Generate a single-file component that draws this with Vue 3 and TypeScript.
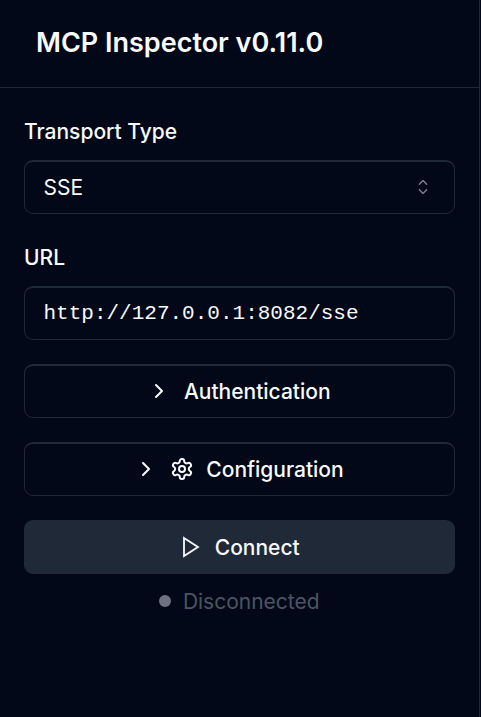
<script setup lang="ts">
import { ref } from 'vue'

const version = '0.11.0'
const transport = ref('SSE')
const url = ref('http://127.0.0.1:8082/sse')
const status = ref('Disconnected')
</script>

<template>
  <aside class="sidebar">
    <header class="header">
      <h1>MCP Inspector v{{ version }}</h1>
    </header>
    <main class="content">
      <div class="field">
        <label>Transport Type</label>
        <button class="box select" type="button" role="combobox">
          <span class="text">{{ transport }}</span>
          <svg class="caret" viewBox="0 0 15 15" fill="currentColor">
            <path fill-rule="evenodd" clip-rule="evenodd" d="M4.93179 5.43179C4.75605 5.60753 4.75605 5.89245 4.93179 6.06819C5.10753 6.24392 5.39245 6.24392 5.56819 6.06819L7.49999 4.13638L9.43179 6.06819C9.60753 6.24392 9.89245 6.24392 10.0682 6.06819C10.2439 5.89245 10.2439 5.60753 10.0682 5.43179L7.81819 3.18179C7.73379 3.0974 7.61933 3.04999 7.49999 3.04999C7.38064 3.04999 7.26618 3.0974 7.18179 3.18179L4.93179 5.43179ZM10.0682 9.56819C10.2439 9.39245 10.2439 9.10753 10.0682 8.93179C9.89245 8.75606 9.60753 8.75606 9.43179 8.93179L7.49999 10.8636L5.56819 8.93179C5.39245 8.75606 5.10753 8.75606 4.93179 8.93179C4.75605 9.10753 4.75605 9.39245 4.93179 9.56819L7.18179 11.8182C7.35753 11.9939 7.64245 11.9939 7.81819 11.8182L10.0682 9.56819Z" />
          </svg>
        </button>
      </div>
      <div class="field">
        <label for="url">URL</label>
        <input id="url" v-model="url" class="box url" type="text" spellcheck="false" />
      </div>
      <button class="box action" type="button">
        <svg class="icon" viewBox="0 0 24 24"><path d="m9 18 6-6-6-6" /></svg>
        <span class="text">Authentication</span>
      </button>
      <button class="box action" type="button">
        <svg class="icon" viewBox="0 0 24 24"><path d="m9 18 6-6-6-6" /></svg>
        <svg class="icon" viewBox="0 0 24 24">
          <path d="M12.22 2h-.44a2 2 0 0 0-2 2v.18a2 2 0 0 1-1 1.73l-.43.25a2 2 0 0 1-2 0l-.15-.08a2 2 0 0 0-2.73.73l-.22.38a2 2 0 0 0 .73 2.73l.15.1a2 2 0 0 1 1 1.72v.51a2 2 0 0 1-1 1.74l-.15.09a2 2 0 0 0-.73 2.73l.22.38a2 2 0 0 0 2.73.73l.15-.08a2 2 0 0 1 2 0l.43.25a2 2 0 0 1 1 1.73V20a2 2 0 0 0 2 2h.44a2 2 0 0 0 2-2v-.18a2 2 0 0 1 1-1.73l.43-.25a2 2 0 0 1 2 0l.15.08a2 2 0 0 0 2.73-.73l.22-.39a2 2 0 0 0-.73-2.73l-.15-.08a2 2 0 0 1-1-1.74v-.5a2 2 0 0 1 1-1.74l.15-.09a2 2 0 0 0 .73-2.73l-.22-.38a2 2 0 0 0-2.73-.73l-.15.08a2 2 0 0 1-2 0l-.43-.25a2 2 0 0 1-1-1.73V4a2 2 0 0 0-2-2z" />
          <circle cx="12" cy="12" r="3" />
        </svg>
        <span class="text">Configuration</span>
      </button>
      <div class="connection">
        <button class="action connect" type="button">
          <svg class="icon play" viewBox="0 0 24 24"><path d="M6 3 20 12 6 21Z" /></svg>
          <span class="text">Connect</span>
        </button>
        <div class="status">
          <span class="dot"></span>
          <span class="text">{{ status }}</span>
        </div>
      </div>
    </main>
  </aside>
</template>

<style>
body {
  background: #020817;
}
</style>

<style scoped>
.sidebar {
  box-sizing: border-box;
  width: 480px;
  height: 717px;
  border-right: 1px solid #1f2937;
  background: #020817;
  color: #f8fafc;
  font-family: Inter, "Liberation Sans", sans-serif;
  font-size: 21px;
  line-height: 30px;
}
.header {
  box-sizing: border-box;
  height: 88px;
  padding: 22px 36px 20px;
  border-bottom: 1px solid #1f2937;
}
h1 {
  margin: 0;
  font-size: 27px;
  line-height: 42px;
  font-weight: 600;
}
.content {
  display: flex;
  flex-direction: column;
  gap: 24px;
  padding: 24px 24.5px 24px 24px;
}
.field {
  display: flex;
  flex-direction: column;
  gap: 12px;
}
label {
  line-height: 36px;
  height: 36px;
  padding-top: 2px;
  box-sizing: border-box;
  font-weight: 500;
}
button,
input {
  box-sizing: border-box;
  width: 100%;
  height: 54px;
  margin: 0;
  border: 0;
  border-radius: 9px;
  background: transparent;
  color: inherit;
  font: inherit;
  outline: none;
}
.box {
  border: 1px solid #1f2937;
  border-top-width: 2px;
}
.text {
  padding-top: 2px;
}
.select {
  display: flex;
  align-items: center;
  justify-content: space-between;
  padding: 0 18.5px 1px;
}
.caret {
  width: 24px;
  height: 24px;
  opacity: 0.5;
}
.url {
  padding: 0 18.5px 1px;
  font-family: "Liberation Mono", monospace;
}
.action {
  display: flex;
  align-items: center;
  justify-content: center;
  gap: 12px;
  padding: 0;
  font-weight: 500;
}
.box.action {
  padding-bottom: 1px;
}
.icon {
  width: 24px;
  height: 24px;
  margin-left: -0.5px;
  margin-right: 0.5px;
  fill: none;
  stroke: currentColor;
  stroke-width: 2;
  stroke-linecap: round;
  stroke-linejoin: round;
}
.icon + .icon {
  margin-left: -1px;
}
.play {
  stroke-linejoin: miter;
  stroke-width: 1.8;
}
.connect {
  background: #1f2937;
}
.connection {
  display: flex;
  flex-direction: column;
  gap: 12px;
}
.status {
  display: flex;
  align-items: center;
  justify-content: center;
  gap: 12px;
  height: 30px;
  color: #4b5563;
}
.dot {
  width: 12px;
  height: 12px;
  border-radius: 50%;
  background: #6b7280;
}
</style>
